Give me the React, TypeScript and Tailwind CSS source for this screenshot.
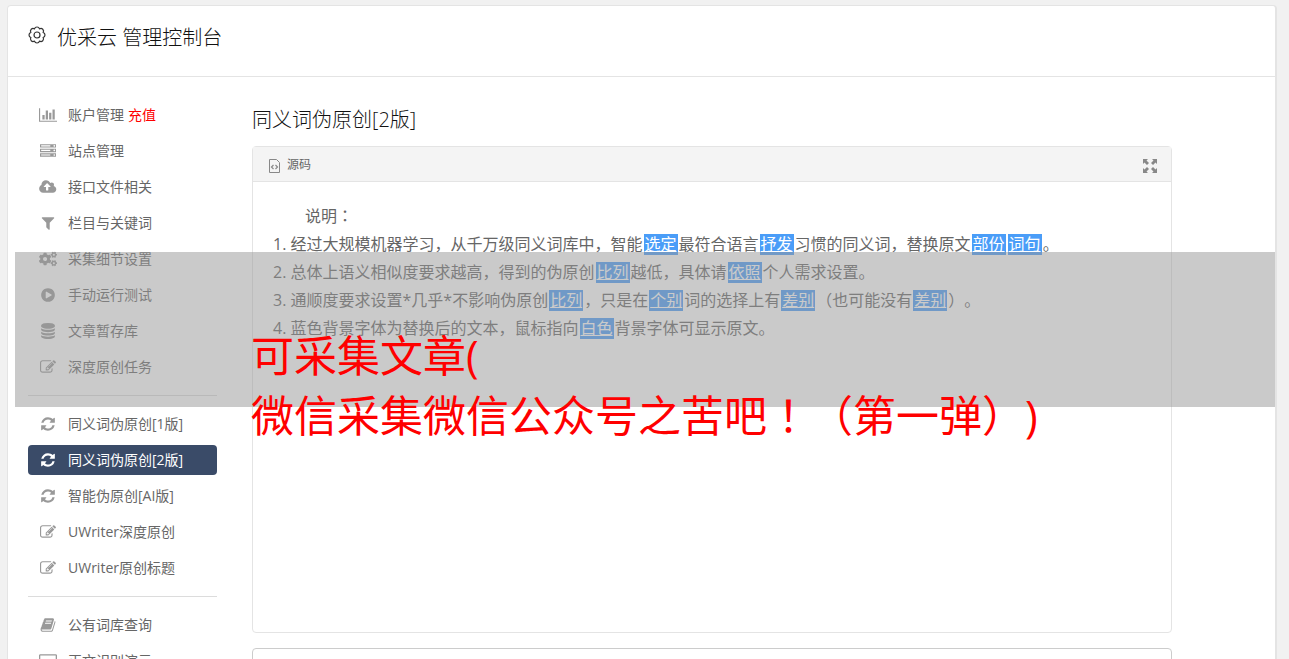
import type { ReactNode } from 'react'
import clsx from 'clsx'
import { FaCogs } from 'react-icons/fa'

type IconName =
  | 'chart'
  | 'server'
  | 'upload'
  | 'filter'
  | 'cogs'
  | 'play'
  | 'database'
  | 'edit'
  | 'refresh'
  | 'book'
  | 'laptop'

type NavItem = {
  label: string
  icon: IconName
  badge?: string
  active?: boolean
}

const navGroups: NavItem[][] = [
  [
    { label: '账户管理', icon: 'chart', badge: '充值' },
    { label: '站点管理', icon: 'server' },
    { label: '接口文件相关', icon: 'upload' },
    { label: '栏目与关键词', icon: 'filter' },
    { label: '采集细节设置', icon: 'cogs' },
    { label: '手动运行测试', icon: 'play' },
    { label: '文章暂存库', icon: 'database' },
    { label: '深度原创任务', icon: 'edit' }
  ],
  [
    { label: '同义词伪原创[1版]', icon: 'refresh' },
    { label: '同义词伪原创[2版]', icon: 'refresh', active: true },
    { label: '智能伪原创[AI版]', icon: 'refresh' },
    { label: 'UWriter深度原创', icon: 'edit' },
    { label: 'UWriter原创标题', icon: 'edit' }
  ],
  [
    { label: '公有词库查询', icon: 'book' },
    { label: '正文识别演示', icon: 'laptop' }
  ]
]

const glyphs: Record<Exclude<IconName, 'cogs'>, { width: number; path: string }> = {
  chart: {
    width: 2048,
    path: 'M640 896v512h-256v-512h256zm384-512v1024h-256v-1024h256zm1024 1152v128h-2048v-1536h128v1408h1920zm-640-896v768h-256v-768h256zm384-384v1152h-256v-1152h256z'
  },
  server: {
    width: 1792,
    path: 'M128 1408h1024v-128h-1024v128zm0-512h1024v-128h-1024v128zm1568 448q0-40-28-68t-68-28-68 28-28 68 28 68 68 28 68-28 28-68zm-1568-960h1024v-128h-1024v128zm1568 448q0-40-28-68t-68-28-68 28-28 68 28 68 68 28 68-28 28-68zm0-512q0-40-28-68t-68-28-68 28-28 68 28 68 68 28 68-28 28-68zm96 832v384h-1792v-384h1792zm0-512v384h-1792v-384h1792zm0-512v384h-1792v-384h1792z'
  },
  upload: {
    width: 1856,
    path: 'M1216 864q0-14-9-23l-352-352q-9-9-23-9t-23 9l-351 351q-10 12-10 24 0 14 9 23t23 9h224v352q0 13 9.5 22.5t22.5 9.5h192q13 0 22.5-9.5t9.5-22.5v-352h224q13 0 22.5-9.5t9.5-22.5zm640 288q0 159-112.5 271.5t-271.5 112.5h-1088q-185 0-316.5-131.5t-131.5-316.5q0-130 70-240t188-165q-2-30-2-43 0-212 150-362t362-150q156 0 285.5 87t188.5 231q71-62 166-62 106 0 181 75t75 181q0 76-41 138 130 31 213.5 135.5t83.5 238.5z'
  },
  filter: {
    width: 1792,
    path: 'M1595 295q17 41-14 70l-493 493v742q0 42-39 59-13 5-25 5-27 0-45-19l-256-256q-19-19-19-45v-486l-493-493q-31-29-14-70 17-39 59-39h1280q42 0 59 39z'
  },
  play: {
    width: 1792,
    path: 'M896 128q209 0 385.5 103t279.5 279.5 103 385.5-103 385.5-279.5 279.5-385.5 103-385.5-103-279.5-279.5-103-385.5 103-385.5 279.5-279.5 385.5-103zm384 823q32-18 32-55t-32-55l-544-320q-31-19-64-1-32 19-32 56v640q0 37 32 56 16 8 32 8 17 0 32-9z'
  },
  database: {
    width: 1792,
    path: 'M896 768q237 0 443-43t325-127v170q0 69-103 128t-280 93.5-385 34.5-385-34.5-280-93.5-103-128v-170q119 84 325 127t443 43zm0 768q237 0 443-43t325-127v170q0 69-103 128t-280 93.5-385 34.5-385-34.5-280-93.5-103-128v-170q119 84 325 127t443 43zm0-384q237 0 443-43t325-127v170q0 69-103 128t-280 93.5-385 34.5-385-34.5-280-93.5-103-128v-170q119 84 325 127t443 43zm0-1152q208 0 385 34.5t280 93.5 103 128v128q0 69-103 128t-280 93.5-385 34.5-385-34.5-280-93.5-103-128v-128q0-69 103-128t280-93.5 385-34.5z'
  },
  edit: {
    width: 1792,
    path: 'M888 1184l116-116-152-152-116 116v56h96v96h56zm440-720q-16-16-33 1l-350 350q-17 17-1 33t33-1l350-350q17-17 1-33zm80 594v190q0 119-84.5 203.5t-203.5 84.5h-832q-119 0-203.5-84.5t-84.5-203.5v-832q0-119 84.5-203.5t203.5-84.5h832q63 0 117 25 15 7 18 23 3 17-9 29l-49 49q-14 14-32 8-23-6-45-6h-832q-66 0-113 47t-47 113v832q0 66 47 113t113 47h832q66 0 113-47t47-113v-126q0-13 9-22l64-64q15-15 35-7t20 29zm-96-738l288 288-672 672h-288v-288zm444 132l-92 92-288-288 92-92q28-28 68-28t68 28l152 152q28 28 28 68t-28 68z'
  },
  refresh: {
    width: 1792,
    path: 'M1639 1056q0 5-1 7-64 268-268 434.5t-478 166.5q-146 0-282.5-55t-243.5-157l-129 129q-19 19-45 19t-45-19-19-45v-448q0-26 19-45t45-19h448q26 0 45 19t19 45-19 45l-137 137q71 66 161 102t187 36q134 0 250-65t186-179q11-17 53-117 8-23 30-23h192q13 0 22.5 9.5t9.5 22.5zm25-800v448q0 26-19 45t-45 19h-448q-26 0-45-19t-19-45 19-45l138-138q-148-137-349-137-134 0-250 65t-186 179q-11 17-53 117-8 23-30 23h-199q-13 0-22.5-9.5t-9.5-22.5v-7q65-268 270-434.5t480-166.5q146 0 284 55.5t245 156.5l130-129q19-19 45-19t45 19 19 45z'
  },
  book: {
    width: 1792,
    path: 'M1703 478q40 57 18 129l-275 906q-19 64-76.5 107.5t-122.5 43.5h-923q-77 0-148.5-53.5t-99.5-131.5q-24-67-2-127 0-4 3-27t4-37q1-8-3-21.5t-3-19.5q2-11 8-21t16.5-23.5 16.5-23.5q23-38 45-91.5t30-91.5q3-10 .5-30t-.5-28q3-11 17-28t17-23q21-36 42-92t25-90q1-9-2.5-32t.5-28q4-13 22-30.5t22-22.5q19-26 42.5-84.5t27.5-96.5q1-8-3-25.5t-2-26.5q2-8 9-18t18-23 17-21q8-12 16.5-30.5t15-35 16-36 19.5-32 26.5-23.5 36-11.5 47.5 5.5l-1 3q38-9 51-9h761q74 0 114 56t18 130l-274 906q-36 119-71.5 153.5t-128.5 34.5h-869q-27 0-38 15-11 16-1 43 24 70 144 70h923q29 0 56-15.5t35-41.5l300-987q7-22 5-57 38 15 59 43zm-1064 2q-4 13 2 22.5t20 9.5h608q13 0 25.5-9.5t16.5-22.5l21-64q4-13-2-22.5t-20-9.5h-608q-13 0-25.5 9.5t-16.5 22.5zm-83 256q-4 13 2 22.5t20 9.5h608q13 0 25.5-9.5t16.5-22.5l21-64q4-13-2-22.5t-20-9.5h-608q-13 0-25.5 9.5t-16.5 22.5z'
  },
  laptop: {
    width: 2016,
    path: 'M160 1536q-66 0-113-47t-47-113v-1088q0-66 47-113t113-47h1696q66 0 113 47t47 113v1088q0 66-47 113t-113 47h-1696zm-16-1248v1088q0 16 16 16h1696q16 0 16-16v-1088q0-16-16-16h-1696q-16 0-16 16z'
  }
}

export default function App() {
  return (
    <div className="relative h-screen overflow-hidden bg-[#f1f1f1] pt-[5px] pr-3 pl-[7px] font-['Open_Sans','Noto_Sans_CJK_SC',sans-serif] text-[#666] [text-spacing-trim:space-all]">
      <div className="min-h-full rounded border border-r-2 border-[#e4e4e4] bg-white">
        {/* Header */}
        <header className="flex h-[71px] items-start gap-[11px] border-b border-[#e4e4e4] px-5 pt-[17px] text-[#333]">
          <GearIcon />
          <h1 className="text-xl leading-[30px] font-light text-[#111]">优采云 管理控制台</h1>
        </header>

        <div className="flex gap-[35px] pt-[23px] pr-[103px] pl-5">
          <Sidebar />

          <main className="min-w-0 flex-1">
            <h2 className="mb-[11px] pt-[5px] text-xl leading-[30px] font-light text-[#111]">
              同义词伪原创[2版]
            </h2>
            <SourcePanel />
            <textarea
              aria-label="原文"
              className="mt-[15px] block h-40 w-full resize-none rounded border border-[#ccc] p-3"
            />
          </main>
        </div>
      </div>

      {/* Banner */}
      <div className="pointer-events-none absolute top-[252px] right-[14px] left-[15px] h-[155px] bg-[rgba(150,150,150,0.5)] pt-[74px] pl-[236px] text-[43px] leading-[60px] text-[#f00]">
        <p>可采集文章(</p>
        <p className="whitespace-nowrap">
          微信采集微信公众号之苦吧<Centered>！</Centered>（第一弹）)
        </p>
      </div>
    </div>
  )
}

function GearIcon() {
  return (
    <svg
      className="mt-[3px] h-[18px] w-[18px]"
      viewBox="0 0 18 18"
      fill="none"
      stroke="currentColor"
      strokeWidth="1.2"
      strokeLinejoin="round"
      aria-hidden="true"
    >
      <path d="M6.5 2.9A2.6 2.6 0 0 1 11.5 2.9 2.6 2.6 0 0 1 15.1 6.5 2.6 2.6 0 0 1 15.1 11.5 2.6 2.6 0 0 1 11.5 15.1 2.6 2.6 0 0 1 6.5 15.1 2.6 2.6 0 0 1 2.9 11.5 2.6 2.6 0 0 1 2.9 6.5 2.6 2.6 0 0 1 6.5 2.9z" />
      <circle cx="9" cy="9" r="3" />
    </svg>
  )
}

function Sidebar() {
  return (
    <nav className="flex w-[189px] shrink-0 flex-col gap-[6px]">
      {navGroups.map((group, index) => (
        <div key={index} className="flex flex-col gap-[6px]">
          {index > 0 && <hr className="my-[7px] border-[#dcdcdc]" />}
          {group.map(item => (
            <a
              key={item.label}
              href="#"
              className={clsx(
                'flex h-[30px] items-center gap-[10px] rounded px-[10px] text-sm',
                item.active ? 'bg-[#3a4b68] text-white' : 'text-[#666]'
              )}
            >
              <span
                className={clsx(
                  'flex w-5 justify-center',
                  item.active ? 'text-white' : 'text-[#999]'
                )}
              >
                <NavIcon name={item.icon} />
              </span>
              <span>
                {item.label}
                {item.badge && <span className="ml-1 text-[#f00]">{item.badge}</span>}
              </span>
            </a>
          ))}
        </div>
      ))}
    </nav>
  )
}

function NavIcon({ name }: { name: IconName }) {
  if (name === 'cogs') {
    return <FaCogs size={18} />
  }
  const { width, path } = glyphs[name]
  return (
    <svg className="h-4 w-[18px]" viewBox={`0 0 ${width} 1792`} fill="currentColor" aria-hidden="true">
      <path d={path} />
    </svg>
  )
}

function SourcePanel() {
  return (
    <section className="min-h-[487px] rounded border border-[#e4e4e4]">
      <div className="flex h-[35px] items-center justify-between border-b border-[#e4e4e4] bg-[#f4f4f4] pt-[2px] pr-[14px] pl-4 text-xs">
        <span className="flex items-center gap-[7px]">
          <svg className="mt-[2px] h-[14px] w-[11px]" viewBox="0 0 11 14" fill="none" stroke="#888" aria-hidden="true">
            <path d="M.5 .5h7l3 3v10h-10z" />
            <path d="M4.500 6 2.500 8l2 2M6.500 6l2 2-2 2" strokeWidth="1.2" />
          </svg>
          源码
        </span>
        <button type="button" aria-label="全屏" className="mt-[2px] text-[#888]">
          <svg className="h-[14px] w-[14px]" viewBox="0 0 14 14" fill="currentColor" aria-hidden="true">
            <path d="M0 0h5L3.500 1.500 6 4 4 6 1.500 3.500 0 5zM14 0v5l-1.500-1.500L10 6 8 4l2.500-2.500L9 0zM0 14V9l1.500 1.500L4 8l2 2-2.500 2.500L5 14zM14 14H9l1.500-1.500L8 10l2-2 2.500 2.500L14 9z" />
          </svg>
        </button>
      </div>

      <div className="px-5 pt-5 text-base leading-7">
        <p className="indent-[2em]">
          说明<Centered>：</Centered>
        </p>
        <ol className="list-inside list-decimal">
          <li>
            经过大规模机器学习，从千万级同义词库中，智能<Mark>选定</Mark>最符合语言<Mark>抒发</Mark>
            习惯的同义词，替换原文<Mark>部份</Mark><Mark>词句</Mark>。
          </li>
          <li>
            总体上语义相似度要求越高，得到的伪原创<Mark>比列</Mark>越低，具体请<Mark>依照</Mark>
            个人需求设置。
          </li>
          <li>
            通顺度要求设置*几乎*不影响伪原创<Mark>比列</Mark>，只是在<Mark>个别</Mark>
            词的选择上有<Mark>差别</Mark>（也可能没有<Mark>差别</Mark>）。
          </li>
          <li>
            蓝色背景字体为替换后的文本，鼠标指向<Mark>白色</Mark>背景字体可显示原文。
          </li>
        </ol>
      </div>
    </section>
  )
}

// replaced word
function Mark({ children }: { children: ReactNode }) {
  return (
    <a href="#" className="mx-px inline-block bg-[#4a9df8] px-px leading-[21px] text-white underline">
      {children}
    </a>
  )
}

// full-width punctuation that sits in the middle of its cell
function Centered({ children }: { children: ReactNode }) {
  return <span className="font-['Noto_Sans_CJK_JP',sans-serif] leading-none">{children}</span>
}
